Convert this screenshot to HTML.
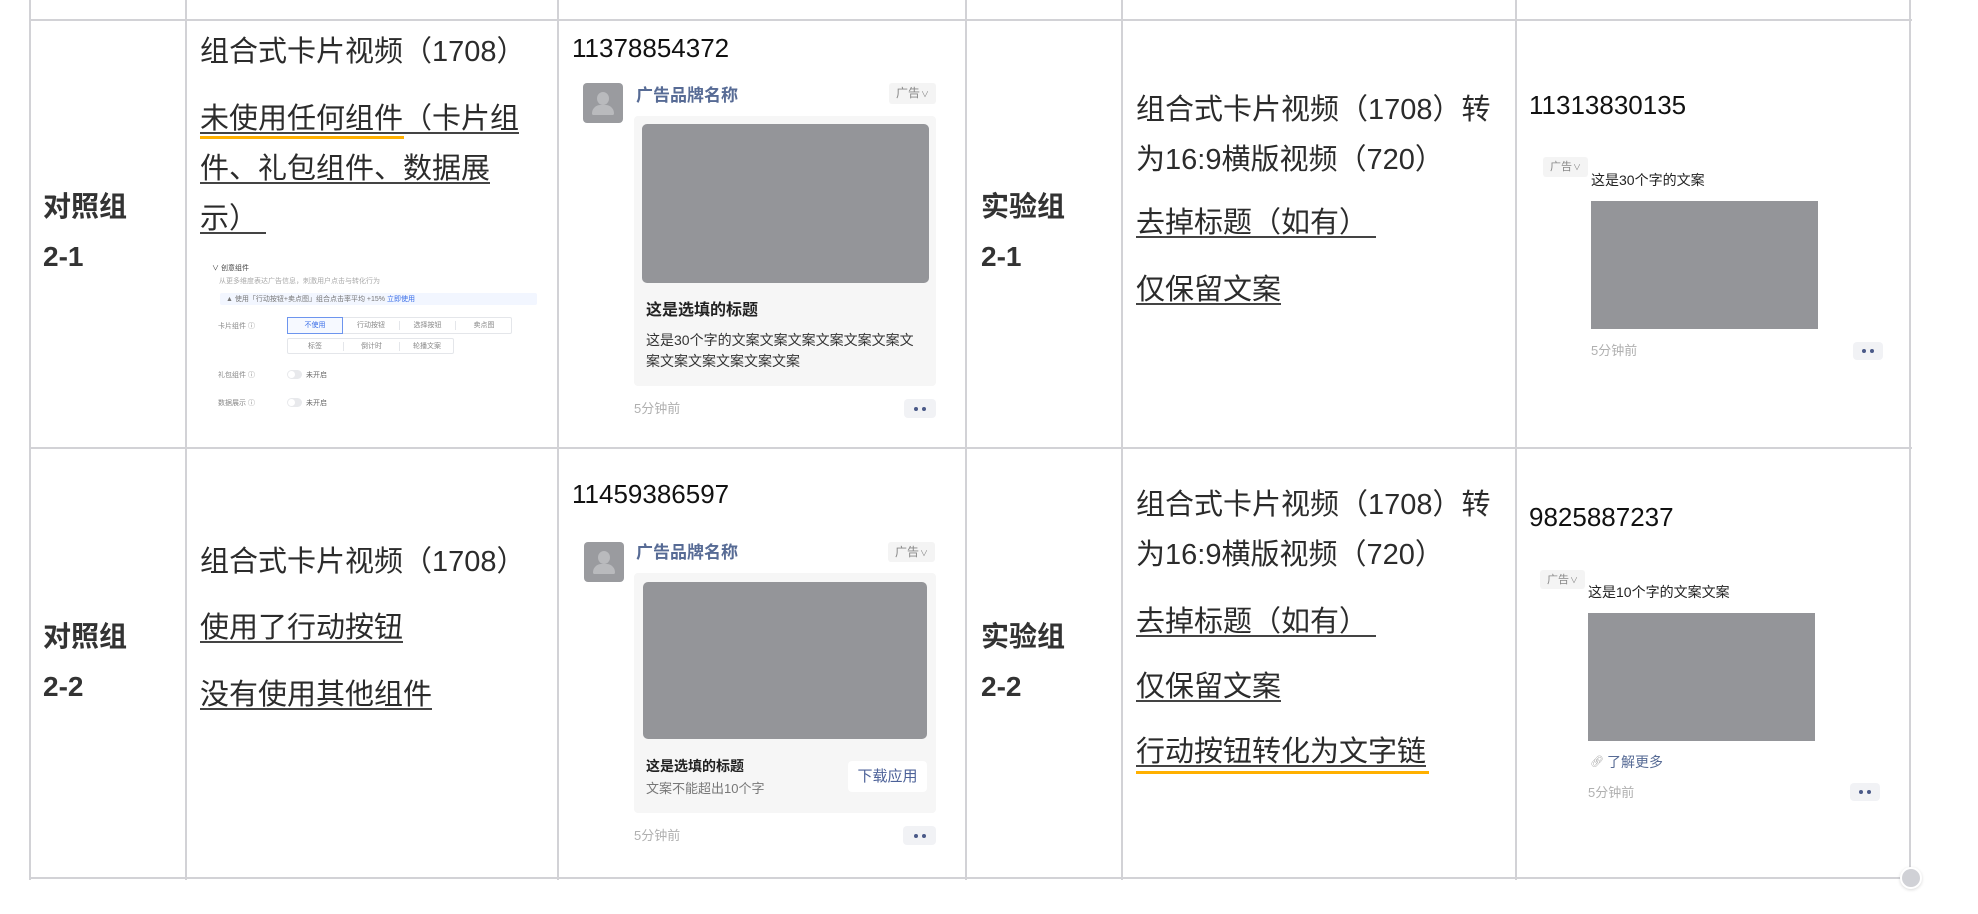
<!DOCTYPE html>
<html><head><meta charset="utf-8"><style>
*{margin:0;padding:0;box-sizing:border-box}
body{width:1978px;height:914px;background:#fff;position:relative;overflow:hidden;font-family:"Liberation Sans","Noto Sans CJK SC",sans-serif;color:#2b2b2b}
.a{position:absolute;white-space:nowrap}
.vl{position:absolute;width:2px;background:#d2d2d6;top:0;height:880px}
.hl{position:absolute;height:2px;background:#d2d2d6;left:30px;width:1882px}
.big{font-size:29px;line-height:26px}
.u{display:inline-block;border-bottom:2px solid #444}
.grp{font-size:28px;font-weight:bold;line-height:26px;color:#333}
.num{font-size:26px;line-height:26px;color:#111}
.tag{position:absolute;background:#f4f4f4;border-radius:3px;font-size:12px;color:#888;text-align:center;line-height:20px}
.tag i{font-style:normal;font-size:8px;margin-left:1px}
.img{position:absolute;background:#949599}
.dots{position:absolute;background:#f1f2f5;border-radius:4px}
.dots:before,.dots:after{content:"";position:absolute;top:50%;width:4px;height:4px;margin-top:-2px;border-radius:50%;background:#4a5a88}
.dots:before{left:calc(50% - 6px)}.dots:after{left:calc(50% + 2px)}
.time{font-size:13px;color:#b0b0b0;line-height:16px}
.av{position:absolute;width:40px;height:40px;background:#9a9b9f;border-radius:4px;overflow:hidden}
.av:before{content:"";position:absolute;left:14px;top:9px;width:12px;height:13px;border-radius:50%;background:#b9babd}
.av:after{content:"";position:absolute;left:9px;top:22px;width:22px;height:10px;border-radius:10px 10px 2px 2px;background:#b9babd}
.brand{font-size:17px;font-weight:bold;color:#576b95;line-height:20px}
.s{font-size:7px;color:#888;line-height:9px}
</style></head><body>

<!-- grid -->
<div class="vl" style="left:29px"></div>
<div class="vl" style="left:185px"></div>
<div class="vl" style="left:557px"></div>
<div class="vl" style="left:965px"></div>
<div class="vl" style="left:1121px"></div>
<div class="vl" style="left:1515px"></div>
<div class="vl" style="left:1909px"></div>
<div class="hl" style="top:19px"></div>
<div class="hl" style="top:447px"></div>
<div class="hl" style="top:877px"></div>
<div class="a" style="left:0;top:0;width:29px;height:914px;background:#fff"></div>
<div class="a" style="left:1900px;top:867px;width:22px;height:22px;border-radius:50%;background:#d0d1d6;border:2px solid #fff;box-shadow:0 1px 3px rgba(0,0,0,.15)"></div>

<!-- col1 -->
<div class="a grp" style="left:43px;top:194px">对照组</div>
<div class="a grp" style="left:43px;top:244px">2-1</div>
<div class="a grp" style="left:43px;top:624px">对照组</div>
<div class="a grp" style="left:43px;top:674px">2-2</div>
<!-- col4 -->
<div class="a grp" style="left:981px;top:194px">实验组</div>
<div class="a grp" style="left:981px;top:244px">2-1</div>
<div class="a grp" style="left:981px;top:624px">实验组</div>
<div class="a grp" style="left:981px;top:674px">2-2</div>

<!-- col2 row1 -->
<div class="a big" style="left:200px;top:39px">组合式卡片视频（1708）</div>
<div class="a big" style="left:200px;top:106px"><span class="u">未使用任何组件（卡片组</span></div>
<div class="a" style="left:200px;top:136px;width:204px;height:3px;background:#ffb000"></div>
<div class="a big" style="left:200px;top:156px"><span class="u">件、礼包组件、数据展</span></div>
<div class="a big" style="left:200px;top:206px"><span class="u">示）&nbsp;</span></div>

<!-- settings mini -->
<div class="a s" style="left:212px;top:264px;color:#444">∨ 创意组件</div>
<div class="a s" style="left:219px;top:277px;color:#aaa">从更多维度表达广告信息，刺激用户点击与转化行为</div>
<div class="a" style="left:220px;top:293px;width:317px;height:12px;background:#f2f6ff;border-radius:2px"></div>
<div class="a s" style="left:226px;top:295px;color:#777">▲ 使用「行动按钮+卖点图」组合点击率平均 +15% <span style="color:#3a6ee8">立即使用</span></div>
<div class="a s" style="left:218px;top:322px">卡片组件 ⓘ</div>
<div class="a" style="left:287px;top:317px;width:225px;height:17px;border:1px solid #e4e6ea;border-radius:2px"></div>
<div class="a s" style="left:287px;top:317px;width:56px;height:17px;border:1px solid #6d95ee;background:#f6f9ff;color:#3a6ee8;text-align:center;line-height:15px">不使用</div>
<div class="a s" style="left:343px;top:321px;width:56px;text-align:center">行动按钮</div>
<div class="a s" style="left:399px;top:321px;width:56px;text-align:center;border-left:1px solid #e4e6ea">选择按钮</div>
<div class="a s" style="left:455px;top:321px;width:57px;text-align:center;border-left:1px solid #e4e6ea">卖点图</div>
<div class="a" style="left:287px;top:338px;width:167px;height:16px;border:1px solid #e4e6ea;border-radius:2px"></div>
<div class="a s" style="left:287px;top:342px;width:56px;text-align:center">标签</div>
<div class="a s" style="left:343px;top:342px;width:56px;text-align:center;border-left:1px solid #e4e6ea">倒计时</div>
<div class="a s" style="left:399px;top:342px;width:55px;text-align:center;border-left:1px solid #e4e6ea">轮播文案</div>
<div class="a s" style="left:218px;top:371px">礼包组件 ⓘ</div>
<div class="a" style="left:287px;top:370px;width:15px;height:9px;border-radius:5px;background:#e8e9ec"></div>
<div class="a" style="left:288px;top:371px;width:7px;height:7px;border-radius:50%;background:#fff"></div>
<div class="a s" style="left:306px;top:371px;color:#666">未开启</div>
<div class="a s" style="left:218px;top:399px">数据展示 ⓘ</div>
<div class="a" style="left:287px;top:398px;width:15px;height:9px;border-radius:5px;background:#e8e9ec"></div>
<div class="a" style="left:288px;top:399px;width:7px;height:7px;border-radius:50%;background:#fff"></div>
<div class="a s" style="left:306px;top:399px;color:#666">未开启</div>

<!-- col2 row2 -->
<div class="a big" style="left:200px;top:549px">组合式卡片视频（1708）</div>
<div class="a big" style="left:200px;top:615px"><span class="u">使用了行动按钮</span></div>
<div class="a big" style="left:200px;top:682px"><span class="u">没有使用其他组件</span></div>

<!-- col3 row1 -->
<div class="a num" style="left:572px;top:35px">11378854372</div>
<div class="av" style="left:583px;top:83px"></div>
<div class="a brand" style="left:636px;top:86px">广告品牌名称</div>
<div class="tag" style="left:889px;top:83px;width:47px;height:21px">广告<i>∨</i></div>
<div class="a" style="left:634px;top:116px;width:302px;height:270px;background:#f6f6f6;border-radius:4px"></div>
<div class="img" style="left:642px;top:124px;width:287px;height:159px;border-radius:5px"></div>
<div class="a" style="left:646px;top:301px;font-size:16px;font-weight:bold;line-height:20px;color:#222">这是选填的标题</div>
<div class="a" style="left:646px;top:330px;font-size:14px;line-height:21px;color:#333">这是30个字的文案文案文案文案文案文案文<br>案文案文案文案文案文案</div>
<div class="a time" style="left:634px;top:401px">5分钟前</div>
<div class="dots" style="left:904px;top:399px;width:32px;height:19px"></div>

<!-- col3 row2 -->
<div class="a num" style="left:572px;top:481px">11459386597</div>
<div class="av" style="left:584px;top:542px"></div>
<div class="a brand" style="left:636px;top:543px">广告品牌名称</div>
<div class="tag" style="left:888px;top:542px;width:47px;height:20px">广告<i>∨</i></div>
<div class="a" style="left:634px;top:573px;width:302px;height:240px;background:#f6f6f6;border-radius:4px"></div>
<div class="img" style="left:643px;top:582px;width:284px;height:157px;border-radius:5px"></div>
<div class="a" style="left:646px;top:757px;font-size:14px;font-weight:bold;line-height:18px;color:#222">这是选填的标题</div>
<div class="a" style="left:646px;top:780px;font-size:13px;line-height:17px;color:#777">文案不能超出10个字</div>
<div class="a" style="left:848px;top:761px;width:79px;height:31px;background:#fff;border-radius:4px;font-size:15px;color:#4c6198;text-align:center;line-height:31px">下载应用</div>
<div class="a time" style="left:634px;top:828px">5分钟前</div>
<div class="dots" style="left:903px;top:826px;width:33px;height:19px"></div>

<!-- col5 row1 -->
<div class="a big" style="left:1136px;top:97px">组合式卡片视频（1708）转</div>
<div class="a big" style="left:1136px;top:147px">为16:9横版视频（720）</div>
<div class="a big" style="left:1136px;top:210px"><span class="u">去掉标题（如有）&nbsp;</span></div>
<div class="a big" style="left:1136px;top:277px"><span class="u">仅保留文案</span></div>

<!-- col5 row2 -->
<div class="a big" style="left:1136px;top:492px">组合式卡片视频（1708）转</div>
<div class="a big" style="left:1136px;top:542px">为16:9横版视频（720）</div>
<div class="a big" style="left:1136px;top:609px"><span class="u">去掉标题（如有）&nbsp;</span></div>
<div class="a big" style="left:1136px;top:674px"><span class="u">仅保留文案</span></div>
<div class="a big" style="left:1136px;top:739px"><span class="u">行动按钮转化为文字链</span></div>
<div class="a" style="left:1136px;top:771px;width:293px;height:3px;background:#ffb000"></div>

<!-- col6 row1 -->
<div class="a num" style="left:1529px;top:92px">11313830135</div>
<div class="tag" style="left:1543px;top:157px;width:45px;height:20px;font-size:11px">广告<i>∨</i></div>
<div class="a" style="left:1591px;top:171px;font-size:14px;line-height:18px;color:#222">这是30个字的文案</div>
<div class="img" style="left:1591px;top:201px;width:227px;height:128px"></div>
<div class="a time" style="left:1591px;top:343px">5分钟前</div>
<div class="dots" style="left:1853px;top:342px;width:30px;height:18px"></div>

<!-- col6 row2 -->
<div class="a num" style="left:1529px;top:504px">9825887237</div>
<div class="tag" style="left:1540px;top:570px;width:45px;height:19px;font-size:11px">广告<i>∨</i></div>
<div class="a" style="left:1588px;top:583px;font-size:14px;line-height:18px;color:#222">这是10个字的文案文案</div>
<div class="img" style="left:1588px;top:613px;width:227px;height:128px"></div>
<div class="a" style="left:1590px;top:754px;font-size:11px;line-height:16px;color:#aaa">&#x1F517;&#xFE0E;</div>
<div class="a" style="left:1607px;top:753px;font-size:14px;line-height:18px;color:#576b95">了解更多</div>
<div class="a time" style="left:1588px;top:785px">5分钟前</div>
<div class="dots" style="left:1850px;top:783px;width:30px;height:18px"></div>

</body></html>
